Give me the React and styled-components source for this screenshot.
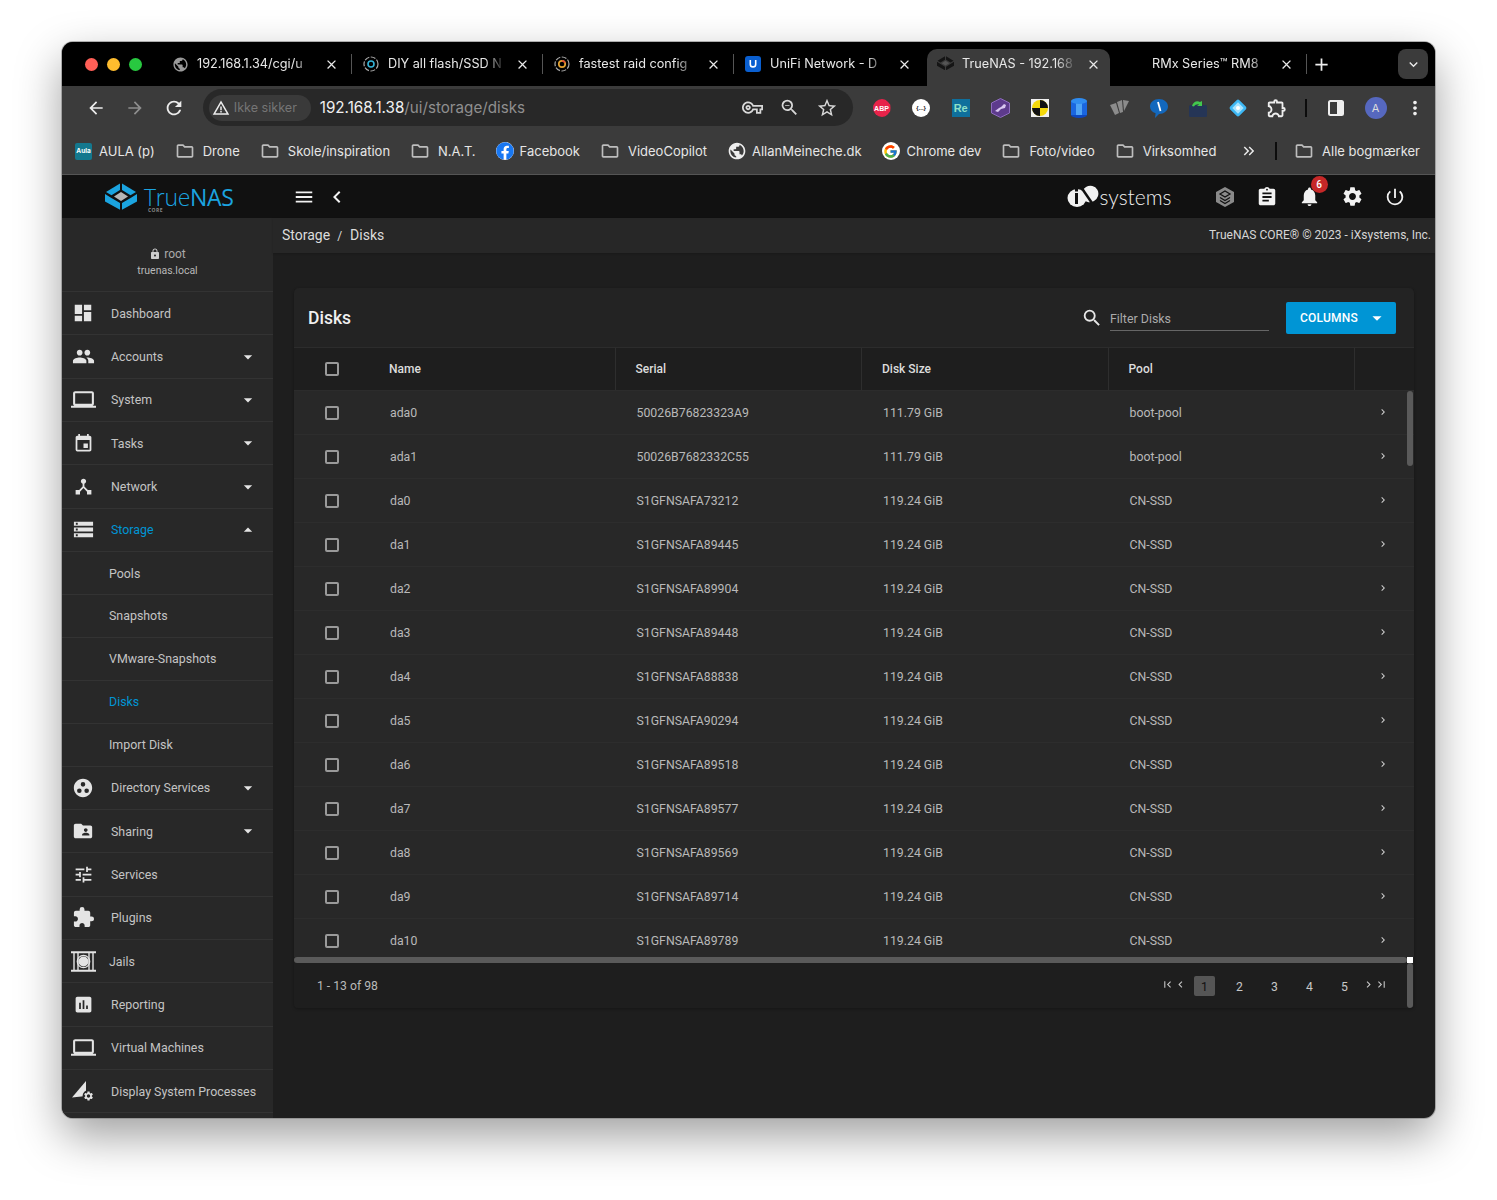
import React from 'react';
import styled, { createGlobalStyle } from 'styled-components';
import {
  MdArrowBack, MdArrowForward, MdRefresh, MdWarningAmber, MdOutlineVpnKey, MdZoomOut, MdStarBorder,
  MdClose, MdAdd, MdExpandMore, MdMoreVert, MdOutlineFolder, MdPublic, MdOutlineExtension,
  MdKeyboardDoubleArrowRight, MdMenu, MdChevronLeft, MdChevronRight, MdFirstPage, MdLastPage,
  MdDashboard, MdPeople, MdLaptop, MdEvent, MdDeviceHub, MdStorage, MdGroupWork, MdFolderShared,
  MdTune, MdExtension, MdAssessment, MdArrowDropDown, MdArrowDropUp, MdSearch, MdAssignment,
  MdNotifications, MdSettings, MdPowerSettingsNew, MdLock,
} from 'react-icons/md';
import { FaFacebook } from 'react-icons/fa';
import { FcGoogle } from 'react-icons/fc';

const GlobalStyle = createGlobalStyle`
  html, body { margin: 0; padding: 0; background: #fff; }
  * { box-sizing: border-box; }
  svg { display: block; flex-shrink: 0; }
`;

const Page = styled.div`
  height: 1200px;
  padding: 42px 62px 0;
  overflow: hidden;
`;

const Window = styled.div`
  width: 1373px;
  height: 1076px;
  display: flex;
  flex-direction: column;
  border-radius: 11px;
  overflow: hidden;
  background: #1e1e1e;
  box-shadow: 0 0 0 1px rgba(130, 130, 130, 0.6), 0 18px 46px rgba(0, 0, 0, 0.38);
  font-family: Inter, "Liberation Sans", sans-serif;
`;

/* browser chrome */
const TabStrip = styled.div`
  height: 44px;
  flex: none;
  background: #000;
  display: flex;
  align-items: flex-end;
`;

const Traffic = styled.div`
  width: 99px;
  height: 44px;
  flex: none;
  padding-left: 23px;
  display: flex;
  align-items: center;
  gap: 9px;
`;

const Light = styled.span`
  width: 13px;
  height: 13px;
  border-radius: 50%;
  background: ${p => p.$color};
`;

const Tab = styled.div`
  position: relative;
  width: ${p => (p.$active ? '183px' : '191px')};
  margin: ${p => (p.$active ? '0 6px 0 2px' : '0')};
  height: ${p => (p.$active ? '37px' : '44px')};
  flex: none;
  display: flex;
  align-items: center;
  padding: ${p => (p.$active ? '0 9px 7px 10px' : '0 13px 0 11px')};
  gap: 9px;
  color: #e8e8e8;
  background: ${p => (p.$active ? '#3b3b3b' : 'transparent')};
  border-radius: 10px 10px 0 0;
  &::after {
    content: '';
    display: ${p => (p.$sep ? 'block' : 'none')};
    position: absolute;
    right: 0;
    top: 12px;
    width: 1px;
    height: 20px;
    background: #555;
  }
`;

const FavSlot = styled.span`
  width: 16px;
  height: 16px;
  flex: none;
`;

const TabTitle = styled.span`
  flex: 1;
  min-width: 0;
  overflow: hidden;
  white-space: nowrap;
  font-size: 12.7px;
  line-height: 16px;
  -webkit-mask-image: linear-gradient(to right, #000 82%, transparent 100%);
  mask-image: linear-gradient(to right, #000 82%, transparent 100%);
`;

const NewTab = styled.span`
  margin-left: 4px;
  height: 44px;
  display: flex;
  align-items: center;
  color: #eee;
`;

const TabMenu = styled.span`
  margin: 0 7px 7px auto;
  width: 30px;
  height: 30px;
  border-radius: 8px;
  background: #3b3b3b;
  color: #e8e8e8;
  display: flex;
  align-items: center;
  justify-content: center;
`;

const Toolbar = styled.div`
  height: 44px;
  flex: none;
  background: #3b3b3b;
  display: flex;
  align-items: center;
  padding-left: 14px;
`;

const NavButton = styled.span`
  width: 39.5px;
  display: flex;
  justify-content: center;
  color: ${p => (p.$dim ? '#8d8d8d' : '#ececec')};
`;

const Omnibox = styled.div`
  width: 654px;
  height: 37px;
  margin-left: 9px;
  margin-top: -1px;
  border-radius: 19px;
  background: #282828;
  display: flex;
  align-items: center;
  padding: 0 15px 0 6px;
`;

const SecurityChip = styled.div`
  height: 26px;
  width: 102px;
  border-radius: 13px;
  background: #3a3a3a;
  display: flex;
  align-items: center;
  gap: 4px;
  padding-left: 3px;
  color: #757575;
  font-size: 12.6px;
  svg { color: #ececec; }
`;

const Url = styled.div`
  margin-left: 9px;
  flex: 1;
  font-size: 15.2px;
  color: #8f8f8f;
  span { color: #f0f0f0; }
`;

const OmniIcons = styled.div`
  display: flex;
  align-items: center;
  gap: 16px;
  color: #d8d8d8;
`;

const Extensions = styled.div`
  margin-left: 9px;
  display: flex;
  align-items: center;
`;

const ExtSlot = styled.span`
  width: 39.6px;
  height: 24px;
  display: flex;
  align-items: center;
  justify-content: center;
  color: #eee;
`;

const ToolbarSep = styled.span`
  width: 2px;
  height: 18px;
  background: #0c0c0c;
  margin: 0 9px 0 8px;
`;

const TextBadge = styled.span`
  width: 18px;
  height: 18px;
  display: flex;
  align-items: center;
  justify-content: center;
  font-family: "Liberation Sans", sans-serif;
  font-weight: 700;
  font-size: ${p => p.$size || 7}px;
  color: ${p => p.$color};
  background: ${p => p.$bg};
  border-radius: ${p => p.$radius || '50%'};
  clip-path: ${p => p.$clip || 'none'};
`;

const Avatar = styled.span`
  width: 22px;
  height: 22px;
  border-radius: 50%;
  background: #5668bf;
  color: #ddd;
  font-size: 11px;
  display: flex;
  align-items: center;
  justify-content: center;
`;

const Bookmarks = styled.div`
  height: 45px;
  flex: none;
  background: #3b3b3b;
  border-bottom: 1px solid #555;
  display: flex;
  align-items: center;
  padding: 0 15px 2px 13px;
  gap: 20px;
`;

const Bookmark = styled.div`
  display: flex;
  align-items: center;
  gap: ${p => p.$gap || 8}px;
  color: #e6e6e6;
  font-size: 13px;
  white-space: nowrap;
  svg { color: #bdbdbd; }
`;

const AulaIcon = styled.span`
  width: 17px;
  height: 17px;
  border-radius: 2px;
  background: #14788e;
  color: #fff;
  font-size: 6.5px;
  font-weight: 700;
  display: flex;
  align-items: center;
  justify-content: center;
`;

const WhiteDisc = styled.span`
  width: 18px;
  height: 18px;
  border-radius: 50%;
  background: #fff;
  display: flex;
  align-items: center;
  justify-content: center;
`;

const BookmarkEnd = styled.div`
  margin-left: auto;
  display: flex;
  align-items: center;
  color: #e6e6e6;
`;

const BarSep = styled.span`
  width: 2px;
  height: 18px;
  background: #0c0c0c;
  margin: 0 17px 0 17px;
`;

/* truenas top bar */
const AppBar = styled.div`
  height: 43px;
  flex: none;
  background: #111;
  display: flex;
  align-items: center;
  color: #f2f2f2;
`;

const Brand = styled.div`
  width: 211px;
  flex: none;
  padding-left: 43px;
  display: flex;
  align-items: center;
  gap: 7px;
`;

const BrandText = styled.div`
  position: relative;
  font-family: "Open Sans", sans-serif;
  font-size: 23px;
  line-height: 26px;
  font-weight: 300;
  color: #1ba4e0;
  letter-spacing: -0.3px;
  b { font-weight: 400; }
  small {
    position: absolute;
    left: 4px;
    top: 23px;
    font-size: 5px;
    line-height: 6px;
    font-weight: 700;
    letter-spacing: 0.4px;
    color: #888;
  }
`;

const BarLeft = styled.div`
  margin-left: 20px;
  display: flex;
  align-items: center;
  gap: 10px;
`;

const BarRight = styled.div`
  margin-left: auto;
  padding-right: 19px;
  display: flex;
  align-items: center;
`;

const IxWordmark = styled.div`
  display: flex;
  align-items: center;
  gap: 1px;
  margin-right: 32px;
  font-family: Lato, sans-serif;
  font-weight: 300;
  font-size: 21px;
  color: #eee;
`;

const BarIcon = styled.span`
  position: relative;
  width: 42.5px;
  display: flex;
  justify-content: center;
`;

const CountBadge = styled.span`
  position: absolute;
  top: -9px;
  left: 22px;
  width: 17px;
  height: 17px;
  border-radius: 50%;
  background: #c62828;
  color: #fff;
  font-family: Roboto, sans-serif;
  font-size: 10px;
  font-weight: 500;
  display: flex;
  align-items: center;
  justify-content: center;
`;

/* app body */
const AppBody = styled.div`
  flex: 1;
  min-height: 0;
  display: flex;
  font-family: Roboto, sans-serif;
`;

const Sidebar = styled.aside`
  width: 211px;
  flex: none;
  background: #282828;
  overflow: hidden;
`;

const UserBox = styled.div`
  height: 74px;
  padding-top: 28px;
  text-align: center;
  border-bottom: 1px solid #333;
  color: #aaa;
`;

const UserLine = styled.div`
  display: flex;
  justify-content: center;
  align-items: center;
  gap: 3px;
  font-size: 12px;
  line-height: 16px;
`;

const HostLine = styled.div`
  margin-top: 2px;
  font-size: 10.5px;
  line-height: 14px;
  color: #b8b8b8;
`;

const NavRow = styled.div`
  height: ${p => (p.$sub ? '42.9px' : '43.35px')};
  display: flex;
  align-items: center;
  border-bottom: 1px solid #333;
  padding-left: ${p => (p.$sub ? '47px' : '10px')};
  color: ${p => (p.$active ? '#0095d5' : '#c4c4c4')};
  font-size: 12.4px;
`;

const NavIcon = styled.span`
  width: 22px;
  margin-right: ${p => (p.$wide ? '15px' : '17px')};
  display: flex;
  justify-content: center;
  color: #e4e4e4;
`;

const NavArrow = styled.span`
  margin-left: auto;
  margin-right: 15px;
  color: #e4e4e4;
`;

const Main = styled.main`
  flex: 1;
  min-width: 0;
  display: flex;
  flex-direction: column;
`;

const Crumbs = styled.div`
  height: 35px;
  flex: none;
  background: #272727;
  box-shadow: 0 1px 2px rgba(0, 0, 0, 0.2);
  display: flex;
  align-items: center;
  justify-content: space-between;
  padding: 0 4px 1px 9px;
  color: #dcdcdc;
  font-size: 14px;
`;

const CrumbSlash = styled.span`
  margin: 0 8px 0 7px;
  font-size: 12px;
`;

const Copyright = styled.span`
  font-size: 12px;
  color: #d6d6d6;
`;

const Card = styled.section`
  position: relative;
  margin: 35px 21px 0;
  height: 720px;
  border-radius: 5px 5px 4px 4px;
  background: #1e1e1e;
  overflow: hidden;
  box-shadow: 0 1px 3px rgba(0, 0, 0, 0.3);
`;

const CardHead = styled.div`
  height: 60px;
  padding: 0 18px 0 14px;
  background: #232323;
  border-bottom: 1px solid #2c2c2c;
  display: flex;
  align-items: center;
`;

const CardTitle = styled.h2`
  margin: 0;
  font-size: 17.5px;
  font-weight: 500;
  color: #f0f0f0;
`;

const Filter = styled.div`
  margin-left: auto;
  display: flex;
  align-items: center;
  gap: 7px;
  margin-top: 1px;
  color: #e6e6e6;
`;

const FilterInput = styled.div`
  width: 159px;
  height: 26px;
  border-bottom: 1px solid #666;
  display: flex;
  align-items: center;
  font-size: 12.4px;
  color: #aaa;
  padding-top: 2px;
`;

const ColumnsButton = styled.button`
  margin-left: 17px;
  width: 110px;
  height: 32px;
  border: 0;
  border-radius: 2px;
  background: #0095d5;
  color: #fff;
  font-family: Roboto, sans-serif;
  font-size: 12px;
  font-weight: 500;
  letter-spacing: 0.2px;
  display: flex;
  align-items: center;
  justify-content: space-between;
  padding: 0 8px 0 14px;
`;

const HeadRow = styled.div`
  height: 43px;
  display: grid;
  grid-template-columns: 75px 246.5px 246.5px 246.5px 246px 1fr;
  background: #1e1e1e;
  border-bottom: 1px solid #2c2c2c;
`;

const HeadCell = styled.div`
  display: flex;
  align-items: center;
  padding-left: ${p => (p.$center ? '0' : '20px')};
  justify-content: ${p => (p.$center ? 'center' : 'flex-start')};
  border-right: ${p => (p.$line ? '1px solid #2e2e2e' : '0')};
  font-size: 12px;
  font-weight: 500;
  color: #dcdcdc;
`;

const Rows = styled.div`
  height: 566px;
  overflow: hidden;
`;

const Row = styled.div`
  height: 44px;
  display: grid;
  grid-template-columns: 75px 246.5px 246.5px 246.5px 246px 1fr;
  background: #282828;
  border-bottom: 1px solid #2d2d2d;
  font-size: 12.3px;
  color: #b9b9b9;
`;

const RowCell = styled.div`
  display: flex;
  align-items: center;
  padding-left: ${p => (p.$center ? '0' : '21px')};
  justify-content: ${p => (p.$center ? 'center' : 'flex-start')};
`;

const RowChevron = styled.div`
  padding: 15px 0 0 22px;
  color: #cfcfcf;
`;

const Check = styled.span`
  width: 14px;
  height: 14px;
  border: 2px solid #9a9a9a;
  border-radius: 2px;
`;

const HScroll = styled.div`
  height: 6px;
  margin-right: 7px;
  border-radius: 3px;
  background: #5a5a5a;
`;

const Footer = styled.div`
  height: 45px;
  background: #1e1e1e;
  display: flex;
  align-items: center;
  padding: 0 26px 0 23px;
  font-size: 12.2px;
  color: #b9b9b9;
`;

const Pager = styled.div`
  margin-left: auto;
  display: flex;
  align-items: center;
  color: #c8c8c8;
`;

const PageArrow = styled.span`
  width: 13px;
  display: flex;
  justify-content: center;
  margin: -3px 0 0 ${p => p.$gap || 0}px;
`;

const PageNum = styled.span`
  width: 21px;
  height: 20px;
  margin: 0 ${p => p.$last ? 7 : 7}px;
  border-radius: 2px;
  display: flex;
  align-items: center;
  justify-content: center;
  padding-top: 2px;
  background: ${p => (p.$current ? '#555' : 'transparent')};
  color: ${p => (p.$current ? '#111' : '#c8c8c8')};
`;

const VThumb = styled.span`
  position: absolute;
  right: 1px;
  top: ${p => p.$top}px;
  width: 6px;
  height: ${p => p.$height}px;
  border-radius: 3px;
  background: ${p => (p.$corner ? '#fff' : '#5a5a5a')};
  border-radius: ${p => (p.$corner ? '0' : '3px')};
`;

const TrueNasMark = ({ size = 32, color = '#1ba4e0', mid = '#b5b5b5' }) => (
  <svg width={size} height={size * 27 / 32} viewBox="0 0 32 27">
    <polygon points="15,0.5 1,9 6.5,12.2 15,7" fill={color} />
    <polygon points="17,0.5 31,9 25.5,12.2 17,7" fill={color} />
    <polygon points="0,11 0,18.5 15,26.8 15,20 6,14.8" fill={color} />
    <polygon points="32,11 32,18.5 17,26.8 17,20 26,14.8" fill={color} />
    <polygon points="16,9 23,13.5 16,18 9,13.5" fill={mid} />
  </svg>
);

const DashedFav = ({ children }) => (
  <svg width="16" height="16" viewBox="0 0 16 16">
    <circle cx="8" cy="8" r="7" fill="none" stroke="#aaa" strokeWidth="1.2" strokeDasharray="5 1.5" />
    {children}
  </svg>
);

const UnifiFav = () => (
  <svg width="16" height="16" viewBox="0 0 16 16">
    <rect width="16" height="16" rx="3" fill="#0a5fd0" />
    <path d="M4.5 4v4.2a3.5 3.5 0 0 0 7 0V4h-1.6v4.2a1.9 1.9 0 0 1-3.8 0V4z" fill="#fff" />
  </svg>
);

const tabs = [
  { title: '192.168.1.34/cgi/u', fav: <MdPublic size={17} color="#9a9a9a" />, sep: true },
  { title: 'DIY all flash/SSD N', fav: <DashedFav><circle cx="8" cy="8" r="3" fill="none" stroke="#35b4d8" strokeWidth="1.6" /></DashedFav>, sep: true },
  { title: 'fastest raid config', fav: <DashedFav><circle cx="8" cy="8" r="3.2" fill="none" stroke="#e0a030" strokeWidth="1.7" /><path d="M8 4.8a3.2 3.2 0 0 1 3 2" fill="none" stroke="#e04a3a" strokeWidth="1.7" /></DashedFav>, sep: true },
  { title: 'UniFi Network - D', fav: <UnifiFav /> },
  { title: 'TrueNAS - 192.168', fav: <TrueNasMark size={17} color="#151515" mid="#555" />, active: true },
  { title: 'RMx Series™ RM8', fav: null, sep: true },
];

const JailsIcon = () => (
  <svg width="25" height="21" viewBox="0 0 25 21" fill="none" stroke="#e4e4e4">
    <path d="M0 1.2h25M0 19.8h25" strokeWidth="2" />
    <path d="M3 2v17M7 2v17M18 2v17M22 2v17" strokeWidth="1.4" />
    <circle cx="12.5" cy="10.5" r="5" fill="#e4e4e4" strokeWidth="0" />
    <circle cx="12.5" cy="10.5" r="6.2" strokeWidth="1.3" />
  </svg>
);

const ProcessesIcon = () => (
  <svg width="22" height="21" viewBox="0 0 22 21" fill="#e4e4e4">
    <polygon points="14,0 14,15 0,16.5" />
    <g transform="translate(11 9.5) scale(0.46)">
      <circle cx="12" cy="12" r="13" fill="#282828" />
      <path d="M19.14 12.94c.04-.3.06-.61.06-.94 0-.32-.02-.64-.07-.94l2.03-1.58c.18-.14.23-.41.12-.61l-1.92-3.32c-.12-.22-.37-.29-.59-.22l-2.39.96c-.5-.38-1.03-.7-1.62-.94l-.36-2.54c-.04-.24-.24-.41-.48-.41h-3.84c-.24 0-.43.17-.47.41l-.36 2.54c-.59.24-1.13.57-1.62.94l-2.39-.96c-.22-.08-.47 0-.59.22L2.74 8.87c-.12.21-.08.47.12.61l2.03 1.58c-.05.3-.09.63-.09.94s.02.64.07.94l-2.03 1.58c-.18.14-.23.41-.12.61l1.92 3.32c.12.22.37.29.59.22l2.39-.96c.5.38 1.03.7 1.62.94l.36 2.54c.05.24.24.41.48.41h3.84c.24 0 .44-.17.47-.41l.36-2.54c.59-.24 1.13-.56 1.62-.94l2.39.96c.22.08.47 0 .59-.22l1.92-3.32c.12-.22.07-.47-.12-.61l-2.01-1.58zM12 15.6c-1.98 0-3.6-1.62-3.6-3.6s1.62-3.6 3.6-3.6 3.6 1.62 3.6 3.6-1.62 3.6-3.6 3.6z" />
    </g>
  </svg>
);

const nav = [
  { label: 'Dashboard', icon: <MdDashboard size={22} /> },
  { label: 'Accounts', icon: <MdPeople size={23} />, arrow: 'down' },
  { label: 'System', icon: <MdLaptop size={25} />, arrow: 'down' },
  { label: 'Tasks', icon: <MdEvent size={21} />, arrow: 'down' },
  { label: 'Network', icon: <MdDeviceHub size={21} />, arrow: 'down' },
  { label: 'Storage', icon: <MdStorage size={23} />, arrow: 'up', active: true },
  { label: 'Pools', sub: true },
  { label: 'Snapshots', sub: true },
  { label: 'VMware-Snapshots', sub: true },
  { label: 'Disks', sub: true, active: true },
  { label: 'Import Disk', sub: true },
  { label: 'Directory Services', icon: <MdGroupWork size={22} />, arrow: 'down' },
  { label: 'Sharing', icon: <MdFolderShared size={22} />, arrow: 'down' },
  { label: 'Services', icon: <MdTune size={21} /> },
  { label: 'Plugins', icon: <MdExtension size={23} /> },
  { label: 'Jails', icon: <JailsIcon />, wide: true },
  { label: 'Reporting', icon: <MdAssessment size={21} /> },
  { label: 'Virtual Machines', icon: <MdLaptop size={25} /> },
  { label: 'Display System Processes', icon: <ProcessesIcon /> },
];

const disks = [
  ['ada0', '50026B76823323A9', '111.79 GiB', 'boot-pool'],
  ['ada1', '50026B7682332C55', '111.79 GiB', 'boot-pool'],
  ['da0', 'S1GFNSAFA73212', '119.24 GiB', 'CN-SSD'],
  ['da1', 'S1GFNSAFA89445', '119.24 GiB', 'CN-SSD'],
  ['da2', 'S1GFNSAFA89904', '119.24 GiB', 'CN-SSD'],
  ['da3', 'S1GFNSAFA89448', '119.24 GiB', 'CN-SSD'],
  ['da4', 'S1GFNSAFA88838', '119.24 GiB', 'CN-SSD'],
  ['da5', 'S1GFNSAFA90294', '119.24 GiB', 'CN-SSD'],
  ['da6', 'S1GFNSAFA89518', '119.24 GiB', 'CN-SSD'],
  ['da7', 'S1GFNSAFA89577', '119.24 GiB', 'CN-SSD'],
  ['da8', 'S1GFNSAFA89569', '119.24 GiB', 'CN-SSD'],
  ['da9', 'S1GFNSAFA89714', '119.24 GiB', 'CN-SSD'],
  ['da10', 'S1GFNSAFA89789', '119.24 GiB', 'CN-SSD'],
];

const bookmarks = [
  { label: 'AULA (p)', icon: <AulaIcon>Aula</AulaIcon>, gap: 7 },
  { label: 'Drone' },
  { label: 'Skole/inspiration' },
  { label: 'N.A.T.' },
  { label: 'Facebook', icon: <WhiteDisc><FaFacebook size={18} style={{ color: '#1877f2' }} /></WhiteDisc>, gap: 6 },
  { label: 'VideoCopilot' },
  { label: 'AllanMeineche.dk', icon: <MdPublic size={20} style={{ color: '#eee' }} />, gap: 5 },
  { label: 'Chrome dev', icon: <WhiteDisc><FcGoogle size={15} /></WhiteDisc>, gap: 7 },
  { label: 'Foto/video' },
  { label: 'Virksomhed' },
];

const extensions = [
  <TextBadge $bg="#e8234a" $color="#fff" $clip="polygon(30% 0, 70% 0, 100% 30%, 100% 70%, 70% 100%, 30% 100%, 0 70%, 0 30%)">ABP</TextBadge>,
  <TextBadge $bg="#fff" $color="#222" $size={6}>{'{...}'}</TextBadge>,
  <TextBadge $bg="#0f6f9c" $color="#8fe0c8" $radius="0" $size={11}>Re</TextBadge>,
  <svg width="19" height="20" viewBox="0 0 19 20">
    <polygon points="9.5,0.5 18.5,5 18.5,15 9.5,19.5 0.5,15 0.5,5" fill="#5d3a8c" stroke="#8f6cc0" />
    <path d="M4 13l4-3 2-1 3-3 2 1-1 3-4 1-3 3z" fill="#d8c6f0" />
  </svg>,
  <svg width="18" height="18" viewBox="0 0 18 18">
    <rect width="18" height="18" fill="#f0f0f0" />
    <circle cx="9" cy="9" r="8" fill="#f5d90a" />
    <path d="M9 1a8 8 0 0 1 8 8H9zM9 17a8 8 0 0 1-8-8h8z" fill="#111" />
  </svg>,
  <svg width="18" height="20" viewBox="0 0 18 20">
    <ellipse cx="9" cy="17" rx="8" ry="3" fill="#0d47c0" />
    <rect x="1" y="3" width="16" height="14" fill="#1a66e0" />
    <rect x="6" y="3" width="6" height="14" fill="#4fa4f5" />
    <ellipse cx="9" cy="3" rx="8" ry="3" fill="#2f8cf0" />
  </svg>,
  <svg width="19" height="17" viewBox="0 0 19 17" fill="#8c8c8c">
    <polygon points="0,5 6,3 9,13 5,15" />
    <polygon points="7,2 12,0 13,12 10,13" />
    <polygon points="13,0 19,1 14,11" />
  </svg>,
  <svg width="18" height="19" viewBox="0 0 18 19">
    <path d="M9 0c5 0 9 3.2 9 7.5S14 15 9 15l-4 4 .6-4.7C2.2 13.2 0 10.6 0 7.5 0 3.2 4 0 9 0z" fill="#1368bd" />
    <path d="M8 3l2.5 9" stroke="#fff" strokeWidth="1.8" />
  </svg>,
  <svg width="18" height="18" viewBox="0 0 18 18">
    <rect y="6" width="18" height="12" rx="1.5" fill="#253556" />
    <path d="M3 7c1-4 5-6 8-4l2-1v5H8l2-1.5C8 5 6 6 5 7.5z" fill="#41c84e" />
  </svg>,
  <svg width="20" height="20" viewBox="0 0 20 20">
    <rect x="3.5" y="3.5" width="13" height="13" rx="2" transform="rotate(45 10 10)" fill="#3db8f5" />
    <rect x="6" y="6" width="8" height="8" transform="rotate(45 10 10)" fill="#a8e4ff" />
    <circle cx="10" cy="10" r="2" fill="#fff" />
  </svg>,
  <MdOutlineExtension size={22} />,
];

export default function App() {
  return (
    <>
      <GlobalStyle />
      <Page>
        <Window>
          <TabStrip>
            <Traffic>
              <Light $color="#ff5f57" />
              <Light $color="#febc2e" />
              <Light $color="#28c840" />
            </Traffic>
            {tabs.map(t => (
              <Tab key={t.title} $active={t.active} $sep={t.sep}>
                <FavSlot>{t.fav}</FavSlot>
                <TabTitle>{t.title}</TabTitle>
                <MdClose size={15} />
              </Tab>
            ))}
            <NewTab><MdAdd size={21} /></NewTab>
            <TabMenu><MdExpandMore size={17} /></TabMenu>
          </TabStrip>

          <Toolbar>
            <NavButton><MdArrowBack size={20} /></NavButton>
            <NavButton $dim><MdArrowForward size={20} /></NavButton>
            <NavButton><MdRefresh size={22} /></NavButton>
            <Omnibox>
              <SecurityChip><MdWarningAmber size={18} />Ikke sikker</SecurityChip>
              <Url><span>192.168.1.38</span>/ui/storage/disks</Url>
              <OmniIcons>
                <MdOutlineVpnKey size={21} />
                <MdZoomOut size={21} />
                <MdStarBorder size={22} />
              </OmniIcons>
            </Omnibox>
            <Extensions>
              {extensions.map((e, i) => <ExtSlot key={i}>{e}</ExtSlot>)}
              <ToolbarSep />
              <ExtSlot>
                <svg width="18" height="18" viewBox="0 0 18 18">
                  <rect x="2" y="2" width="14" height="14" rx="1.5" fill="none" stroke="#eee" strokeWidth="2" />
                  <rect x="10" y="2" width="6" height="14" fill="#eee" />
                </svg>
              </ExtSlot>
              <ExtSlot><Avatar>A</Avatar></ExtSlot>
              <ExtSlot><MdMoreVert size={22} /></ExtSlot>
            </Extensions>
          </Toolbar>

          <Bookmarks>
            {bookmarks.map(b => (
              <Bookmark key={b.label} $gap={b.gap}>
                {b.icon || <MdOutlineFolder size={20} />}
                {b.label}
              </Bookmark>
            ))}
            <BookmarkEnd>
              <MdKeyboardDoubleArrowRight size={18} />
              <BarSep />
              <Bookmark><MdOutlineFolder size={20} />Alle bogmærker</Bookmark>
            </BookmarkEnd>
          </Bookmarks>

          <AppBar>
            <Brand>
              <TrueNasMark />
              <BrandText>True<b>NAS</b><small>CORE</small></BrandText>
            </Brand>
            <BarLeft>
              <MdMenu size={22} />
              <MdChevronLeft size={24} />
            </BarLeft>
            <BarRight>
              <IxWordmark>
                <svg width="32" height="24" viewBox="0 0 32 24">
                  <ellipse cx="10" cy="13" rx="9.5" ry="9" fill="#f2f2f2" />
                  <ellipse cx="23" cy="9" rx="8.5" ry="8" fill="#f2f2f2" transform="rotate(-30 23 9)" />
                  <path d="M14 2l13 19" stroke="#111" strokeWidth="2.5" />
                  <path d="M8 8h3v11H8zM8 4h3v2.5H8z" fill="#111" />
                </svg>
                systems
              </IxWordmark>
              <BarIcon>
                <svg width="20" height="22" viewBox="0 0 20 22" fill="none" stroke="#8a8a8a">
                  <polygon points="10,1 19,6 19,16 10,21 1,16 1,6" fill="#8a8a8a" stroke="none" />
                  <path d="M5 8l5-3 5 3-5 3zM5 11.5l5 3 5-3M5 14.5l5 3 5-3" stroke="#111" strokeWidth="1.3" />
                </svg>
              </BarIcon>
              <BarIcon><MdAssignment size={22} /></BarIcon>
              <BarIcon>
                <MdNotifications size={23} />
                <CountBadge>6</CountBadge>
              </BarIcon>
              <BarIcon><MdSettings size={23} /></BarIcon>
              <BarIcon><MdPowerSettingsNew size={22} /></BarIcon>
            </BarRight>
          </AppBar>

          <AppBody>
            <Sidebar>
              <UserBox>
                <UserLine><MdLock size={12} color="#ccc" />root</UserLine>
                <HostLine>truenas.local</HostLine>
              </UserBox>
              {nav.map(n => (
                <NavRow key={n.label} $sub={n.sub} $active={n.active}>
                  {n.icon && <NavIcon $wide={n.wide}>{n.icon}</NavIcon>}
                  {n.label}
                  {n.arrow && (
                    <NavArrow>
                      {n.arrow === 'up' ? <MdArrowDropUp size={20} /> : <MdArrowDropDown size={20} />}
                    </NavArrow>
                  )}
                </NavRow>
              ))}
            </Sidebar>

            <Main>
              <Crumbs>
                <div>Storage<CrumbSlash>/</CrumbSlash>Disks</div>
                <Copyright>TrueNAS CORE® © 2023 - iXsystems, Inc.</Copyright>
              </Crumbs>
              <Card>
                <CardHead>
                  <CardTitle>Disks</CardTitle>
                  <Filter>
                    <MdSearch size={22} />
                    <FilterInput>Filter Disks</FilterInput>
                  </Filter>
                  <ColumnsButton>COLUMNS<MdArrowDropDown size={22} /></ColumnsButton>
                </CardHead>
                <HeadRow>
                  <HeadCell $center><Check /></HeadCell>
                  <HeadCell $line>Name</HeadCell>
                  <HeadCell $line>Serial</HeadCell>
                  <HeadCell $line>Disk Size</HeadCell>
                  <HeadCell $line>Pool</HeadCell>
                  <HeadCell />
                </HeadRow>
                <Rows>
                  {disks.map(d => (
                    <Row key={d[0]}>
                      <RowCell $center><Check /></RowCell>
                      {d.map(v => <RowCell key={v}>{v}</RowCell>)}
                      <RowChevron><MdChevronRight size={12} /></RowChevron>
                    </Row>
                  ))}
                </Rows>
                <HScroll />
                <Footer>
                  1 - 13 of 98
                  <Pager>
                    <PageArrow><MdFirstPage size={13} /></PageArrow>
                    <PageArrow><MdChevronLeft size={13} /></PageArrow>
                    <PageNum $current>1</PageNum>
                    <PageNum>2</PageNum>
                    <PageNum>3</PageNum>
                    <PageNum>4</PageNum>
                    <PageNum $last>5</PageNum>
                    <PageArrow><MdChevronRight size={13} /></PageArrow>
                    <PageArrow><MdLastPage size={13} /></PageArrow>
                  </Pager>
                </Footer>
                <VThumb $top={103} $height={75} />
                <VThumb $top={669} $height={6} $corner />
                <VThumb $top={675} $height={45} />
              </Card>
            </Main>
          </AppBody>
        </Window>
      </Page>
    </>
  );
}
